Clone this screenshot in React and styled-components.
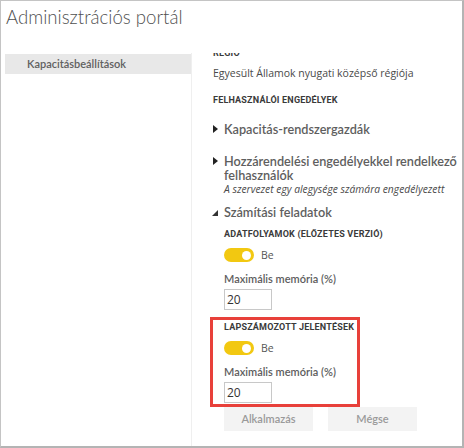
import React from "react";
import styled, { createGlobalStyle } from "styled-components";

const Global = createGlobalStyle`
  html, body { margin: 0; padding: 0; background: #fff; }
  body { font-family: "Open Sans", "Noto Sans", sans-serif; }
  * { box-sizing: border-box; }
`;

const Frame = styled.div`
  width: 464px;
  height: 448px;
  border-top: 1px solid #c4c4c4;
  border-left: 1px solid #c4c4c4;
  border-right: 2px solid #b4b4b4;
  border-bottom: 2px solid #b4b4b4;
  display: flex;
  flex-direction: column;
  overflow: hidden;
  background: #fff;
`;

const Title = styled.h1`
  margin: 0;
  height: 52px;
  flex: none;
  padding: 3px 0 0 5px;
  font-family: "Lato", sans-serif;
  font-weight: 300;
  font-size: 18.6px;
  line-height: 26px;
  color: #505050;
`;

const Body = styled.div`
  flex: 1;
  display: flex;
  min-height: 0;
`;

const Nav = styled.nav`
  width: 191px;
  flex: none;
  border-right: 1px solid #efefef;
  padding: 1px 0 0 4px;
`;

const NavItem = styled.div`
  height: 20px;
  background: #e8e8e8;
  padding-left: 22px;
  font-family: "Lato", sans-serif;
  font-size: 11px;
  font-weight: 600;
  line-height: 20px;
  color: #606060;
`;

const Content = styled.main`
  flex: 1;
  padding-left: 21px;
  overflow: hidden;
`;

const Clipped = styled.div`
  margin-top: -6px;
`;

const SectionHead = styled.div`
  font-family: "Roboto", sans-serif;
  font-weight: 700;
  font-size: 9px;
  letter-spacing: 0.2px;
  text-transform: uppercase;
  white-space: nowrap;
  color: #3a3a3a;
  line-height: 12px;
  margin-top: ${p => p.$mt || 0}px;
`;

const Text = styled.div`
  font-size: 10.5px;
  color: #4a4a4a;
  line-height: 14px;
  margin-top: ${p => p.$mt || 0}px;
`;

const Expander = styled.div`
  display: flex;
  align-items: flex-start;
  margin-left: -1px;
  margin-top: ${p => p.$mt || 0}px;
`;

const Caret = styled.span`
  width: 12px;
  flex: none;
  display: flex;
  padding-top: ${p => (p.$open ? 5 : 3)}px;
  padding-left: ${p => (p.$open ? 0 : 1)}px;
`;

const ExpTitle = styled.div`
  font-family: "Lato", sans-serif;
  font-size: 12.7px;
  font-weight: 600;
  color: #5e5e5e;
  line-height: 14px;
  white-space: nowrap;
`;

const Sub = styled.div`
  font-size: 10.3px;
  font-style: italic;
  color: #4a4a4a;
  line-height: 14px;
`;

const Workload = styled.div`
  margin-top: ${p => p.$mt || 0}px;
  padding-left: 11px;
  ${p => p.$boxed && `
    width: 150px;
    margin-left: -3px;
    padding: 1px 0 1px 11px;
    border: 3px solid #e8403a;
  `}
`;

const ToggleRow = styled.div`
  display: flex;
  align-items: center;
  gap: 7px;
  margin-top: 8px;
  height: 14px;
`;

const Track = styled.div`
  width: 30px;
  height: 14px;
  border-radius: 7px;
  background: #f2c811;
  position: relative;
`;

const Knob = styled.div`
  position: absolute;
  right: 3px;
  top: 2.5px;
  width: 9px;
  height: 9px;
  border-radius: 50%;
  background: #fff;
`;

const ToggleLabel = styled.span`
  font-size: 10.5px;
  color: #555;
`;

const FieldLabel = styled.div`
  font-family: "Lato", sans-serif;
  font-size: 11px;
  font-weight: 600;
  color: #5e5e5e;
  line-height: 14px;
  margin-top: 10px;
`;

const Input = styled.div`
  width: 48px;
  height: 21px;
  border: 1px solid #c8c8c8;
  margin-top: 3px;
  font-size: 12px;
  line-height: 19px;
  padding-left: 2px;
  color: #333;
`;

const Buttons = styled.div`
  display: flex;
  gap: 15px;
  padding-left: 11px;
`;

const Button = styled.div`
  width: 89px;
  height: 24px;
  background: #f3f3f3;
  color: #9a9a9a;
  font-family: "Lato", sans-serif;
  font-size: 11px;
  font-weight: 600;
  line-height: 24px;
  text-align: center;
`;

const RightTri = () => (
  <svg width="5" height="8" viewBox="0 0 5 8"><path d="M0 0 L5 4 L0 8 Z" fill="#222" /></svg>
);
const DownTri = () => (
  <svg width="6" height="6" viewBox="0 0 6 6"><path d="M6 0 L6 6 L0 6 Z" fill="#333" /></svg>
);

const Toggle = () => (
  <ToggleRow>
    <Track><Knob /></Track>
    <ToggleLabel>Be</ToggleLabel>
  </ToggleRow>
);

export default function App() {
  return (
    <>
      <Global />
      <Frame>
        <Title>Adminisztrációs portál</Title>
        <Body>
          <Nav>
            <NavItem>Kapacitásbeállítások</NavItem>
          </Nav>
          <Content>
            <Clipped>
              <SectionHead>Régió</SectionHead>
              <Text $mt={7}>Egyesült Államok nyugati középső régiója</Text>
              <SectionHead $mt={14}>Felhasználói engedélyek</SectionHead>
              <Expander $mt={16}>
                <Caret><RightTri /></Caret>
                <ExpTitle>Kapacitás-rendszergazdák</ExpTitle>
              </Expander>
              <Expander $mt={18}>
                <Caret><RightTri /></Caret>
                <div>
                  <ExpTitle>Hozzárendelési engedélyekkel rendelkező<br />felhasználók</ExpTitle>
                  <Sub>A szervezet egy alegysége számára engedélyezett</Sub>
                </div>
              </Expander>
              <Expander $mt={9}>
                <Caret $open><DownTri /></Caret>
                <ExpTitle>Számítási feladatok</ExpTitle>
              </Expander>
              <Workload $mt={9}>
                <SectionHead>Adatfolyamok (előzetes verzió)</SectionHead>
                <Toggle />
                <FieldLabel>Maximális memória (%)</FieldLabel>
                <Input>20</Input>
              </Workload>
              <Workload $boxed $mt={7}>
                <SectionHead>Lapszámozott jelentések</SectionHead>
                <Toggle />
                <FieldLabel>Maximális memória (%)</FieldLabel>
                <Input>20</Input>
              </Workload>
              <Buttons>
                <Button>Alkalmazás</Button>
                <Button>Mégse</Button>
              </Buttons>
            </Clipped>
          </Content>
        </Body>
      </Frame>
    </>
  );
}
